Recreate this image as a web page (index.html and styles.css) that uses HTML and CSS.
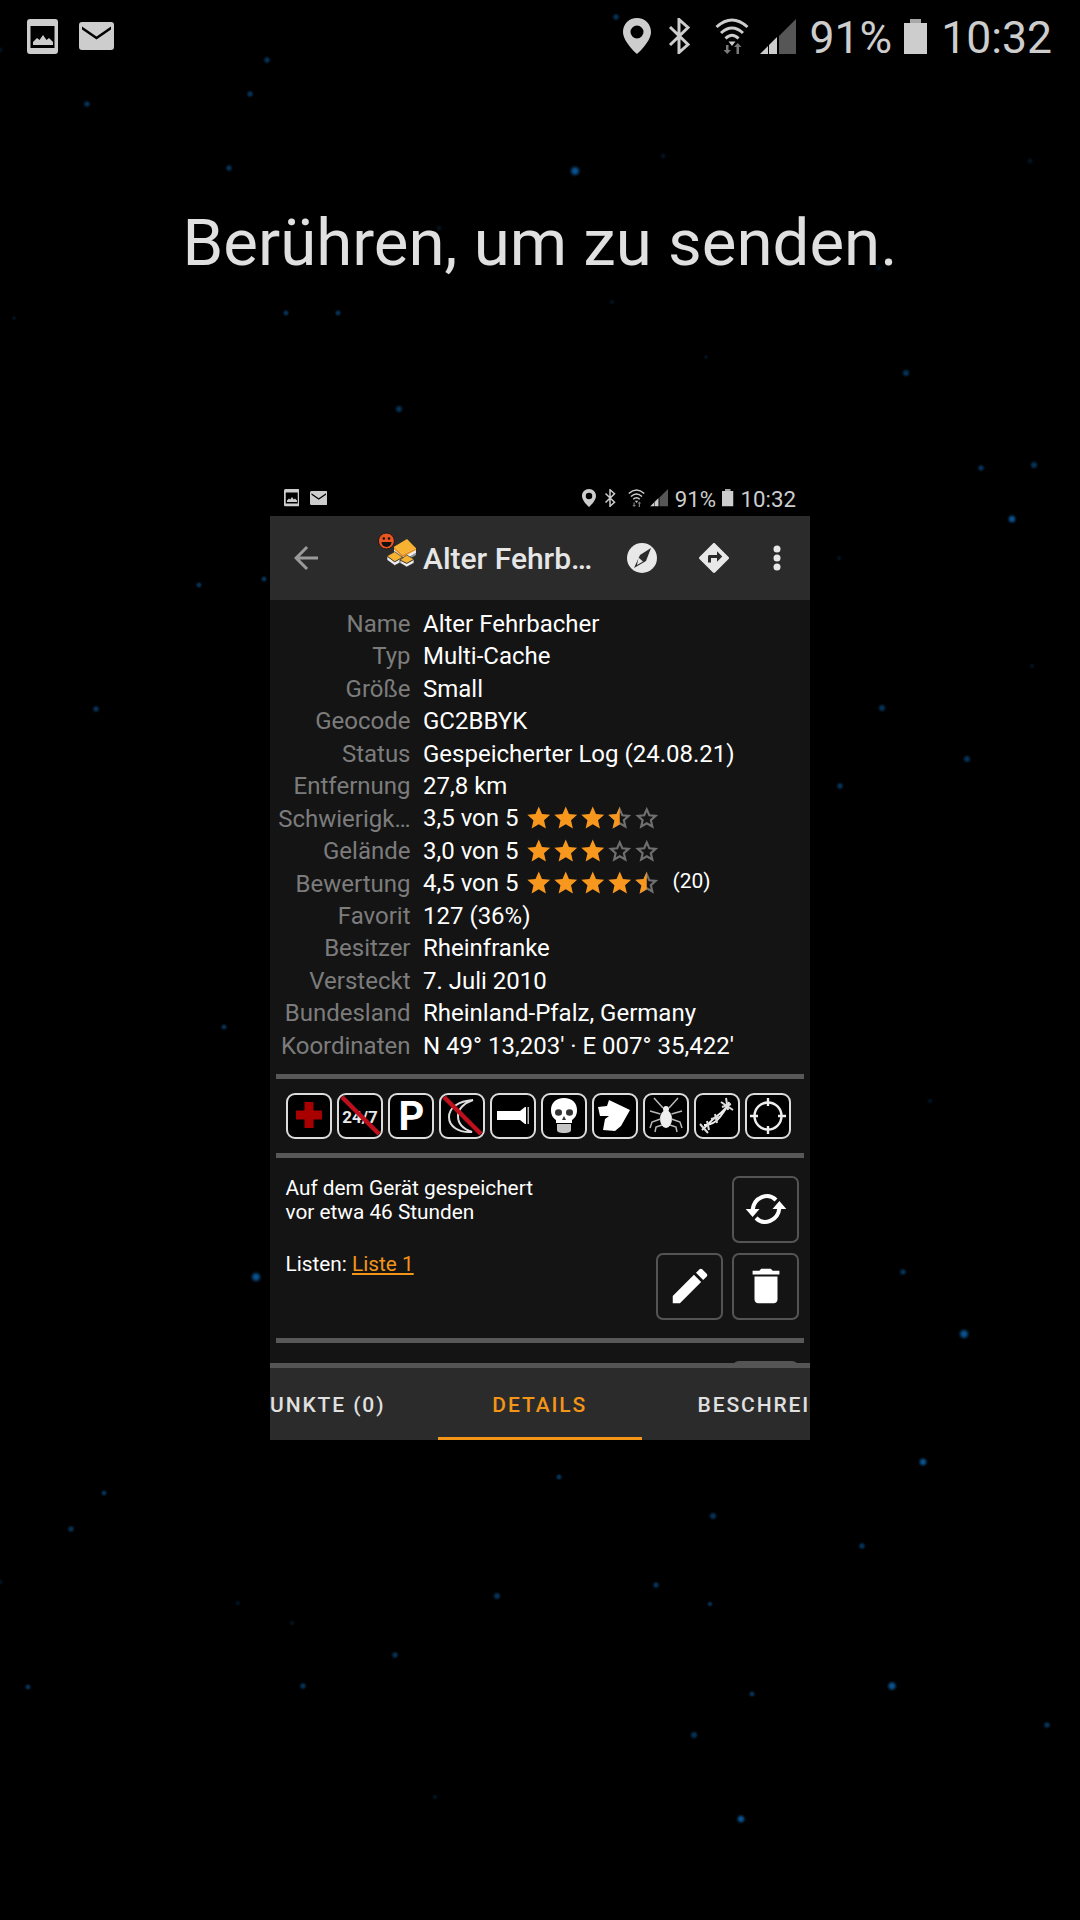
FILE: index.html
```html
<!DOCTYPE html>
<html lang="de">
<head>
<meta charset="utf-8">
<title>Berühren, um zu senden.</title>
<link rel="stylesheet" href="styles.css">
</head>
<body>
<svg class="defs" width="0" height="0" aria-hidden="true">
  <defs>
    <radialGradient id="glow"><stop offset="0" stop-color="#0c64ad"/><stop offset=".4" stop-color="#094a82"/><stop offset="1" stop-color="#031a2e" stop-opacity="0"/></radialGradient>
    <clipPath id="left-half"><rect width="12" height="24"/></clipPath>
    <symbol id="s-image" viewBox="0 0 31 35"><path fill-rule="evenodd" d="M3 0h25a3 3 0 0 1 3 3v29a3 3 0 0 1-3 3H3a3 3 0 0 1-3-3V3a3 3 0 0 1 3-3zM3.500 7v22h24V7z"/><path d="M6 26v-3l4-4 2.500 2 3.500-5 3.500 5 2.500-2 4 4v3z"/></symbol>
    <symbol id="s-mail" viewBox="0 0 35 28"><path fill-rule="evenodd" d="M3 0h29a3 3 0 0 1 3 3v22a3 3 0 0 1-3 3H3a3 3 0 0 1-3-3V3a3 3 0 0 1 3-3zM3 4.500v3l14.500 10 14.500-10v-3L17.500 14.500z"/></symbol>
    <symbol id="s-pin" viewBox="0 0 28 36"><path fill-rule="evenodd" d="M14 0C6 0 0 6 0 14c0 10 14 22 14 22s14-12 14-22C28 6 22 0 14 0zm0 7.500a6.500 6.500 0 1 1 0 13 6.500 6.500 0 0 1 0-13z"/></symbol>
    <symbol id="s-bt" viewBox="0 0 25 36"><path fill="none" stroke="currentColor" stroke-width="3" d="M3 9l18 17.500-9 8V1.500l9 8L3 27"/></symbol>
    <symbol id="s-wifi" viewBox="0 0 34 36"><path fill="none" stroke="currentColor" stroke-width="3" d="M1.500 9Q17-5 32.500 9M6 15Q17 5 28 15M10.500 20.500Q17 14 23.500 20.500"/><path d="M13.500 23.500h7L17 28z"/><path fill="#7a7a7a" d="M11 27h2.500v5H16l-3.750 4-3.750-4H11zM22.750 25l3.750 4H24v7h-2.500v-7H19z"/></symbol>
    <symbol id="s-signal" viewBox="0 0 36 35"><path fill="#565656" d="M36 0v35H19V17z"/><path d="M0 35l8-8v8zM9 26l8-8v17H9z"/></symbol>
    <symbol id="s-battery" viewBox="0 0 23 35"><path fill="#a8a8a8" d="M6 0h11v4H6z"/><path d="M0 4h23v31H0z"/></symbol>
    <symbol id="star-full" viewBox="0 0 24 24"><path d="M12 .5l3.300 7.700 8.400.8-6.300 5.600 1.900 8.300L12 18.600 4.700 22.900l1.900-8.300L.3 9l8.400-.8z"/></symbol>
    <symbol id="star-empty" viewBox="0 0 24 24"><path fill="none" stroke="#6f6f6f" stroke-width="2.200" d="M12 3.500l2.600 6 6.500.6-4.900 4.400 1.500 6.400L12 17.600l-5.700 3.300 1.500-6.400-4.900-4.400 6.500-.6z"/></symbol>
    <symbol id="star-half" viewBox="0 0 24 24"><path fill="none" stroke="#6f6f6f" stroke-width="2.200" d="M12 3.500l2.600 6 6.500.6-4.900 4.400 1.500 6.400L12 17.600l-5.700 3.300 1.500-6.400-4.900-4.400 6.500-.6z"/><path clip-path="url(#left-half)" d="M12 .5l3.300 7.700 8.400.8-6.300 5.600 1.900 8.300L12 18.600 4.700 22.900l1.900-8.300L.3 9l8.400-.8z"/></symbol>
  </defs>
</svg>

<main class="screen">
  <svg class="sky" viewBox="0 0 1080 1920" aria-hidden="true">
    <g class="star-b"><circle cx="575" cy="171" r="6.500"/><circle cx="256" cy="1277" r="6.500"/><circle cx="964" cy="1334" r="6.500"/><circle cx="892" cy="1686" r="6"/><circle cx="923" cy="1462" r="5.500"/><circle cx="1012" cy="519" r="5.500"/><circle cx="741" cy="1819" r="5.500"/></g>
    <g class="star-m"><circle cx="616" cy="17" r="4.500"/><circle cx="267" cy="60" r="4.500"/><circle cx="87" cy="104" r="4.500"/><circle cx="250" cy="94" r="4.500"/><circle cx="229" cy="168" r="4.500"/><circle cx="286" cy="313" r="4"/><circle cx="338" cy="313" r="4"/><circle cx="906" cy="373" r="5"/><circle cx="399" cy="409" r="5"/><circle cx="981" cy="468" r="4.500"/><circle cx="1034" cy="465" r="5"/><circle cx="199" cy="585" r="4"/><circle cx="264" cy="579" r="4"/><circle cx="96" cy="709" r="4.500"/><circle cx="224" cy="1027" r="4"/><circle cx="882" cy="708" r="5"/><circle cx="967" cy="759" r="5"/><circle cx="840" cy="786" r="4.500"/><circle cx="903" cy="1272" r="4.500"/><circle cx="559" cy="1477" r="4"/><circle cx="104" cy="1493" r="4"/><circle cx="713" cy="1516" r="5"/><circle cx="71" cy="1529" r="4.500"/><circle cx="862" cy="1546" r="4.500"/><circle cx="656" cy="1585" r="4.500"/><circle cx="497" cy="1596" r="5"/><circle cx="710" cy="1604" r="3.500"/><circle cx="395" cy="1655" r="4.500"/><circle cx="28" cy="1687" r="4"/><circle cx="303" cy="1686" r="4.500"/><circle cx="752" cy="1694" r="4"/><circle cx="1047" cy="1725" r="4.500"/><circle cx="694" cy="1735" r="5"/></g>
    <g class="star-d"><circle cx="0" cy="50" r="4"/><circle cx="663" cy="156" r="4"/><circle cx="1030" cy="161" r="4"/><circle cx="439" cy="228" r="4"/><circle cx="879" cy="268" r="4"/><circle cx="612" cy="302" r="3.500"/><circle cx="14" cy="318" r="3"/><circle cx="706" cy="357" r="3"/><circle cx="839" cy="558" r="3.500"/><circle cx="1032" cy="666" r="3.500"/><circle cx="930" cy="1101" r="3.500"/><circle cx="238" cy="1603" r="3.500"/><circle cx="292" cy="1623" r="3.500"/><circle cx="435" cy="1797" r="3.500"/><circle cx="0" cy="1582" r="4"/></g>
  </svg>

  <header class="status status-big">
    <div class="status-left">
      <svg class="si si-image"><use href="#s-image"/></svg>
      <svg class="si si-mail"><use href="#s-mail"/></svg>
    </div>
    <div class="status-right">
      <svg class="si si-pin"><use href="#s-pin"/></svg>
      <svg class="si si-bt"><use href="#s-bt"/></svg>
      <svg class="si si-wifi"><use href="#s-wifi"/></svg>
      <svg class="si si-signal"><use href="#s-signal"/></svg>
      <span class="status-text status-pct">91%</span>
      <svg class="si si-battery"><use href="#s-battery"/></svg>
      <span class="status-text status-time">10:32</span>
    </div>
  </header>

  <h1 class="prompt">Berühren, um zu senden.</h1>

  <section class="shot">
    <header class="status status-small">
      <div class="status-left">
        <svg class="si si-image"><use href="#s-image"/></svg>
        <svg class="si si-mail"><use href="#s-mail"/></svg>
      </div>
      <div class="status-right">
        <svg class="si si-pin"><use href="#s-pin"/></svg>
        <svg class="si si-bt"><use href="#s-bt"/></svg>
        <svg class="si si-wifi"><use href="#s-wifi"/></svg>
        <svg class="si si-signal"><use href="#s-signal"/></svg>
        <span class="status-text status-pct">91%</span>
        <svg class="si si-battery"><use href="#s-battery"/></svg>
        <span class="status-text status-time">10:32</span>
      </div>
    </header>

    <div class="appbar">
      <svg class="app-icon back" viewBox="0 0 24 24"><path d="M20 11H7.830l5.590-5.590L12 4l-8 8 8 8 1.410-1.410L7.830 13H20v-2z"/></svg>
      <svg class="cache" viewBox="0 0 38 36">
        <path fill="#ececec" d="M16 15v6l8.600 8 13.400-8v-5z"/>
        <path fill="#9a9a9a" d="M16 21l8.600 8 13.400-8v2l-13.400 8-8.600-8z"/>
        <path fill="#e8901a" d="M16 14.700v2.500l8.600 7.800 13.400-7v-1.700L24.600 22.500z"/>
        <path fill="#f8b232" d="M16 14.700L29 7l9 9.300-13.400 6.200z"/>
        <g class="cube-small">
          <path fill="#ececec" d="M9 24v4l7.700 5.500 7.900-4v-4.200l-7.900 4.400z"/>
          <path fill="#f8b232" d="M9 24l7.700-4.300 7.900 5.600-7.900 4.400z"/>
          <path fill="#ececec" d="M22 28v3l6.700 4 7.300-4v-3.700l-7.300 4z"/>
          <path fill="#f8b232" d="M22 28l6.700-5 7.300 4.300-7.300 4z"/>
        </g>
        <circle cx="8.400" cy="9" r="8" fill="#ea5520" stroke="#1a1a1a"/>
        <circle cx="5.800" cy="6.500" r="1.300" fill="#111"/><circle cx="11" cy="6.500" r="1.300" fill="#111"/>
        <path fill="#111" d="M3.500 10h10a5 5 0 0 1-10 0z"/>
      </svg>
      <div class="app-title">Alter Fehrb…</div>
      <svg class="app-icon compass" viewBox="0 0 36 36"><circle cx="18" cy="18" r="15" fill="#e8e8e8"/><path fill="#2b2b2b" d="M27 8l-5 13-12 7 6-13z"/><path fill="#e8e8e8" d="M14.500 17.500l4.500 4-6 3.500z"/></svg>
      <svg class="app-icon direction" viewBox="0 0 24 24"><path d="M21.710 11.290l-9-9c-.39-.39-1.020-.39-1.410 0l-9 9c-.39.39-.39 1.020 0 1.410l9 9c.39.39 1.020.39 1.410 0l9-9c.39-.38.39-1.010 0-1.410zM14 14.500V12h-4v3H8v-4c0-.55.45-1 1-1h5V7.500l3.500 3.500-3.500 3.500z"/></svg>
      <svg class="app-icon more" viewBox="0 0 36 36"><circle cx="18" cy="9" r="3.500"/><circle cx="18" cy="18" r="3.500"/><circle cx="18" cy="27" r="3.500"/></svg>
    </div>

    <div class="content">
      <dl class="facts">
        <dt>Name</dt><dd>Alter Fehrbacher</dd>
        <dt>Typ</dt><dd>Multi-Cache</dd>
        <dt>Größe</dt><dd>Small</dd>
        <dt>Geocode</dt><dd>GC2BBYK</dd>
        <dt>Status</dt><dd>Gespeicherter Log (24.08.21)</dd>
        <dt>Entfernung</dt><dd>27,8 km</dd>
        <dt>Schwierigk…</dt>
        <dd class="rated">3,5 von 5
          <span class="stars"><svg class="star"><use href="#star-full"/></svg><svg class="star"><use href="#star-full"/></svg><svg class="star"><use href="#star-full"/></svg><svg class="star"><use href="#star-half"/></svg><svg class="star"><use href="#star-empty"/></svg></span>
        </dd>
        <dt>Gelände</dt>
        <dd class="rated">3,0 von 5
          <span class="stars"><svg class="star"><use href="#star-full"/></svg><svg class="star"><use href="#star-full"/></svg><svg class="star"><use href="#star-full"/></svg><svg class="star"><use href="#star-empty"/></svg><svg class="star"><use href="#star-empty"/></svg></span>
        </dd>
        <dt>Bewertung</dt>
        <dd class="rated">4,5 von 5
          <span class="stars"><svg class="star"><use href="#star-full"/></svg><svg class="star"><use href="#star-full"/></svg><svg class="star"><use href="#star-full"/></svg><svg class="star"><use href="#star-full"/></svg><svg class="star"><use href="#star-half"/></svg></span>
          <span class="votes">(20)</span>
        </dd>
        <dt>Favorit</dt><dd>127 (36%)</dd>
        <dt>Besitzer</dt><dd>Rheinfranke</dd>
        <dt>Versteckt</dt><dd>7. Juli 2010</dd>
        <dt>Bundesland</dt><dd>Rheinland-Pfalz, Germany</dd>
        <dt>Koordinaten</dt><dd>N 49° 13,203' · E 007° 35,422'</dd>
      </dl>

      <hr class="rule rule-facts">

      <div class="attrs">
        <div class="attr"><svg viewBox="0 0 42 42"><path fill="#a80000" d="M16.500 7h9v8.500H34v9h-8.500V33h-9v-8.500H8v-9h8.500z"/></svg></div>
        <div class="attr"><svg viewBox="0 0 42 42"><text class="attr-247" x="21" y="28" text-anchor="middle">24/7</text><path class="attr-slash" d="M3 2l37 37"/></svg></div>
        <div class="attr"><svg viewBox="0 0 42 42"><text class="attr-p" x="21.500" y="35" text-anchor="middle">P</text></svg></div>
        <div class="attr"><svg viewBox="0 0 42 42"><path fill="none" stroke="#ddd" stroke-width="2" d="M32 5C17 6 8 13 8 22c0 9 9 16 23 15-9-3-14-8-14-16 0-7 6-13 15-16z"/><path class="attr-slash" d="M3 2l37 37"/></svg></div>
        <div class="attr"><svg viewBox="0 0 42 42"><path fill="#fff" d="M5 16h23v9H5zM28 16l5-4h1v17h-1l-5-4z"/><path fill="#bbb" d="M35.500 12h1.500v17h-1.500z"/></svg></div>
        <div class="attr"><svg viewBox="0 0 42 42"><path fill="#fff" d="M21 3c8.500 0 13 5 13 12 0 5-2 8-5 10v3H13v-3c-3-2-5-5-5-10C8 8 12.500 3 21 3z"/><path fill="#c4c4c4" d="M14 29h14v6c0 2-2 3-7 3s-7-1-7-3z"/><ellipse cx="15.500" cy="17.500" rx="3.500" ry="3.300" fill="#333"/><ellipse cx="26.500" cy="17.500" rx="3.500" ry="3.300" fill="#333"/><path fill="#333" d="M21 21l2 4h-4z"/></svg></div>
        <div class="attr"><svg viewBox="0 0 42 42"><path fill="#fff" d="M15 5l21 10-9 16-6 5-12-1 2-11 4-3H6L4 12l9-1z"/></svg></div>
        <div class="attr"><svg viewBox="0 0 42 42"><ellipse cx="21" cy="24" rx="6" ry="9" fill="#eee"/><circle cx="21" cy="14" r="3" fill="#eee"/><path fill="none" stroke="#b8b8b8" stroke-width="1.500" d="M18 13L9 3M24 13l9-10M15.500 19L5 16M26.500 19L37 16M15.500 24L7 27l-2 6M26.500 24l8.500 3 2 6M17 30l-6 2-1 5M25 30l6 2 1 5"/></svg></div>
        <div class="attr"><svg viewBox="0 0 42 42"><path fill="none" stroke="#eee" stroke-width="2" d="M6 35C14 28 15 25 21 21s8-8 13-12M8 30C15 30 21 26 24 22s7-9 9-15"/><path fill="none" stroke="#ddd" stroke-width="2" d="M4 29l8 9M11 26l2 9M30 3l2 12M25 7l12 8M35 9l-9 3M19 19l2 9M15 24l9-2"/></svg></div>
        <div class="attr"><svg viewBox="0 0 42 42"><circle cx="21" cy="21" r="13.500" fill="none" stroke="#eee" stroke-width="2.400"/><path stroke="#eee" stroke-width="2.400" d="M21 3v8M21 31v8M3 21h8M31 21h8"/></svg></div>
      </div>

      <hr class="rule">

      <div class="store">
        <div class="store-text">
          <p class="store-line">Auf dem Gerät gespeichert<br>vor etwa 46 Stunden</p>
          <p class="store-lists">Listen: <a class="store-link" href="#">Liste 1</a></p>
        </div>
        <div class="store-actions">
          <div class="action action-refresh"><svg viewBox="0 0 46 46"><path class="sync" d="M9.600 24C11 11 25 6 33 14"/><path class="sync" d="M36.400 22C35 35 21 40 13 32"/><path d="M2.700 23h13.800l-6.900 8zM29.500 23h13.800l-6.900-8z"/></svg></div>
          <div class="action"><svg viewBox="0 0 24 24"><path d="M3 17.250V21h3.750L17.810 9.940l-3.750-3.750L3 17.250zM20.710 7.040c.39-.39.39-1.020 0-1.410l-2.340-2.340c-.39-.39-1.020-.39-1.410 0l-1.830 1.830 3.750 3.750 1.830-1.830z"/></svg></div>
          <div class="action"><svg viewBox="0 0 24 24"><path d="M6 19c0 1.100.9 2 2 2h8c1.100 0 2-.9 2-2V7H6v12zM19 4h-3.500l-1-1h-5l-1 1H5v2h14V4z"/></svg></div>
        </div>
      </div>

      <hr class="rule">

      <div class="store-next"><div class="action"></div></div>
    </div>

    <nav class="tabs">
      <div class="tab tab-left">UNKTE (0)</div>
      <div class="tab tab-active">DETAILS</div>
      <div class="tab tab-right">BESCHREI</div>
    </nav>
  </section>
</main>
</body>
</html>
```

FILE: styles.css
```css
* { box-sizing: border-box; }

html, body {
  margin: 0;
  background: #000;
}

body {
  font-family: Roboto, "Noto Sans", sans-serif;
}

.defs { position: absolute; }

.screen {
  position: relative;
  width: 1080px;
  height: 1920px;
  overflow: hidden;
  background: #000;
}

.sky {
  position: absolute;
  inset: 0;
  width: 1080px;
  height: 1920px;
}
.sky circle { fill: url(#glow); }
.star-b { opacity: .9; }
.star-m { opacity: .55; }
.star-d { opacity: .2; }

/* Status bar: same component at full and half scale */
.status {
  position: relative;
  display: flex;
  justify-content: space-between;
  align-items: center;
  height: calc(72px * var(--u));
  padding: 0 calc(28px * var(--u)) 0 calc(27px * var(--u));
  background: transparent;
  color: #cdcdcd;
}
.status-big { --u: 1; }
.status-small { --u: .5; background: #000; }

.status-left, .status-right {
  display: flex;
  align-items: center;
}

.si { display: block; fill: currentColor; }
.si-image { width: calc(31px * var(--u)); height: calc(35px * var(--u)); margin-right: calc(21px * var(--u)); }
.si-mail { width: calc(35px * var(--u)); height: calc(28px * var(--u)); }
.si-pin { width: calc(28px * var(--u)); height: calc(36px * var(--u)); margin-right: calc(16px * var(--u)); }
.si-bt { width: calc(25px * var(--u)); height: calc(36px * var(--u)); margin-right: calc(23px * var(--u)); }
.si-wifi { width: calc(34px * var(--u)); height: calc(36px * var(--u)); margin-right: calc(11px * var(--u)); }
.si-signal { width: calc(36px * var(--u)); height: calc(35px * var(--u)); margin-right: calc(13.5px * var(--u)); }
.si-battery { width: calc(23px * var(--u)); height: calc(35px * var(--u)); margin-right: calc(14px * var(--u)); }

.status-text {
  font-size: calc(44.5px * var(--u));
  line-height: calc(48px * var(--u));
  padding-top: calc(4px * var(--u));
}
.status-pct { margin-right: calc(12px * var(--u)); }

.prompt {
  position: relative;
  height: 408px;
  margin: 0;
  padding-top: 131px;
  font-size: 65.4px;
  line-height: 80px;
  font-weight: 400;
  color: #e0e0e0;
  text-align: center;
}

/* Shrunk phone screenshot */
.shot {
  position: relative;
  display: flex;
  flex-direction: column;
  width: 540px;
  height: 960px;
  margin: 0 auto;
  background: #141414;
}

.appbar {
  display: flex;
  align-items: center;
  flex: none;
  height: 84px;
  background: #2b2b2b;
}
.app-icon { display: block; flex: none; width: 36px; height: 36px; }
.back { fill: #9a9a9a; margin-left: 18px; }
.cache { flex: none; width: 38px; height: 36px; margin: -17px 7px 0 54px; overflow: visible; }
.cube-small { stroke: #2b2b2b; stroke-width: .7px; }
.app-title {
  width: 167px;
  font-size: 30px;
  font-weight: 500;
  color: #e6e6e6;
  white-space: nowrap;
}
.compass { margin-left: 34px; }
.direction { fill: #e8e8e8; margin-left: 36px; }
.more { fill: #e8e8e8; margin-left: 26.5px; }

.content {
  flex: 1;
  min-height: 0;
  overflow: hidden;
  padding: 8px 6px 0;
}

.facts {
  display: grid;
  grid-template-columns: 134.5px 1fr;
  grid-auto-rows: 32.45px;
  column-gap: 12.5px;
  margin: 0;
  font-size: 24px;
  line-height: 32.45px;
  white-space: nowrap;
}
.facts dt { color: #7c7c7c; text-align: right; }
.facts dd { margin: 0; color: #fff; }

.facts .rated { display: flex; align-items: center; margin-top: -1px; }
.stars { display: flex; margin: -1px 0 0 9px; gap: 3.4px; }
.star { display: block; width: 23.500px; height: 23.500px; fill: #f7971d; }
.votes { margin-left: 14px; font-size: 21px; margin-top: -4px; }

.rule {
  height: 5px;
  margin: 14px 0;
  border: 0;
  background: #585858;
}
.rule-facts { margin-top: 11.7px; }

.attrs {
  display: flex;
  gap: 5px;
  padding-left: 10px;
}
.attr {
  flex: none;
  width: 46px;
  height: 46px;
  border: 2px solid #dcdcdc;
  border-radius: 9px;
  background: #000;
}
.attr svg { display: block; width: 42px; height: 42px; overflow: visible; }
.attr-247 { font: 700 17px Roboto, sans-serif; fill: #e8e8e8; }
.attr-p { font: 700 40px Roboto, sans-serif; fill: #fff; }
.attr-slash { stroke: #bd101c; stroke-width: 4.5px; fill: none; }

.store {
  display: flex;
  justify-content: space-between;
  padding: 4px 5px 4px 9.5px;
}
.store-text {
  font-size: 20.800px;
  line-height: 24.5px;
  color: #fff;
}
.store-line { margin: 0; }
.store-lists { margin: 27px 0 0; }
.store-link { color: #f39518; }

.store-actions {
  display: grid;
  grid-template-columns: 67px 67px;
  grid-auto-rows: 67px;
  gap: 10px 9px;
}
.action {
  display: flex;
  align-items: center;
  justify-content: center;
  border: 2px solid #545454;
  border-radius: 7px;
}
.action svg { display: block; width: 46px; height: 46px; fill: #fff; }
.action-refresh { grid-column: 2; }
.sync { fill: none; stroke: #fff; stroke-width: 4px; }

.store-next { display: flex; justify-content: flex-end; padding: 4px 5px 0 0; }
.store-next .action { width: 67px; height: 67px; }

.tabs {
  display: grid;
  grid-template-columns: 168px 203.5px 1fr;
  flex: none;
  height: 77px;
  border-top: 5px solid #555;
  background: #2b2b2b;
  font-size: 21px;
  font-weight: 500;
  letter-spacing: 1.9px;
  line-height: 74px;
  color: #e0e0e0;
  white-space: nowrap;
  overflow: hidden;
}
.tab-left { text-align: right; padding-right: 55px; }
.tab-active {
  height: 72px;
  border-bottom: 3px solid #f39518;
  color: #f39518;
  text-align: center;
}
.tab-right { padding-left: 56px; }
```
